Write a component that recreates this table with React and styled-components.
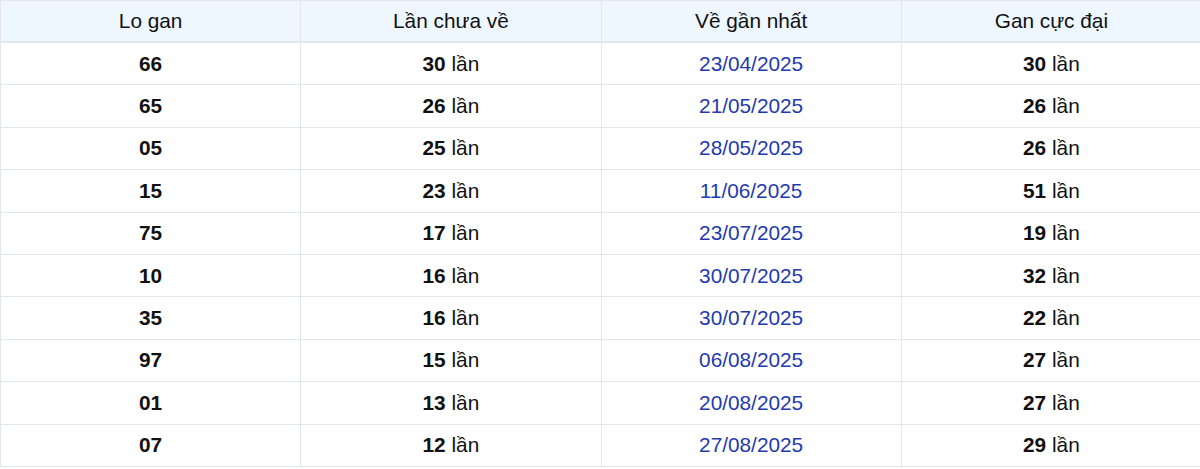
import React from 'react';
import styled, { createGlobalStyle } from 'styled-components';

const GlobalStyle = createGlobalStyle`
  html, body {
    margin: 0;
    padding: 0;
    background: #ffffff;
  }
  body {
    font-family: "Liberation Sans", Arial, sans-serif;
  }
`;

const Table = styled.table`
  width: 1202px;
  border-collapse: collapse;
  table-layout: fixed;
  font-size: 20.8px;
  color: #111111;
`;

const HeadCell = styled.th`
  height: 40px;
  padding: 0;
  font-weight: 400;
  text-align: center;
  background-color: #eef6ff;
  border: 1px solid #e3e6ea;
  border-bottom-width: 2px;
`;

const Cell = styled.td`
  height: 41.4px;
  padding: 0;
  text-align: center;
  border: 1px solid #e3e6ea;
  color: ${(props) => (props.date ? '#1f3aae' : '#111111')};
`;

const Num = styled.b`
  font-weight: 700;
`;

const rows = [
  ['66', '30', '23/04/2025', '30'],
  ['65', '26', '21/05/2025', '26'],
  ['05', '25', '28/05/2025', '26'],
  ['15', '23', '11/06/2025', '51'],
  ['75', '17', '23/07/2025', '19'],
  ['10', '16', '30/07/2025', '32'],
  ['35', '16', '30/07/2025', '22'],
  ['97', '15', '06/08/2025', '27'],
  ['01', '13', '20/08/2025', '27'],
  ['07', '12', '27/08/2025', '29'],
];

const App = () => (
  <>
    <GlobalStyle />
    <Table>
      <thead>
        <tr>
          <HeadCell>Lo gan</HeadCell>
          <HeadCell>Lần chưa về</HeadCell>
          <HeadCell>Về gần nhất</HeadCell>
          <HeadCell>Gan cực đại</HeadCell>
        </tr>
      </thead>
      <tbody>
        {rows.map(([lo, miss, date, max]) => (
          <tr key={lo}>
            <Cell>
              <Num>{lo}</Num>
            </Cell>
            <Cell>
              <Num>{miss}</Num> lần
            </Cell>
            <Cell date>{date}</Cell>
            <Cell>
              <Num>{max}</Num> lần
            </Cell>
          </tr>
        ))}
      </tbody>
    </Table>
  </>
);

export default App;
